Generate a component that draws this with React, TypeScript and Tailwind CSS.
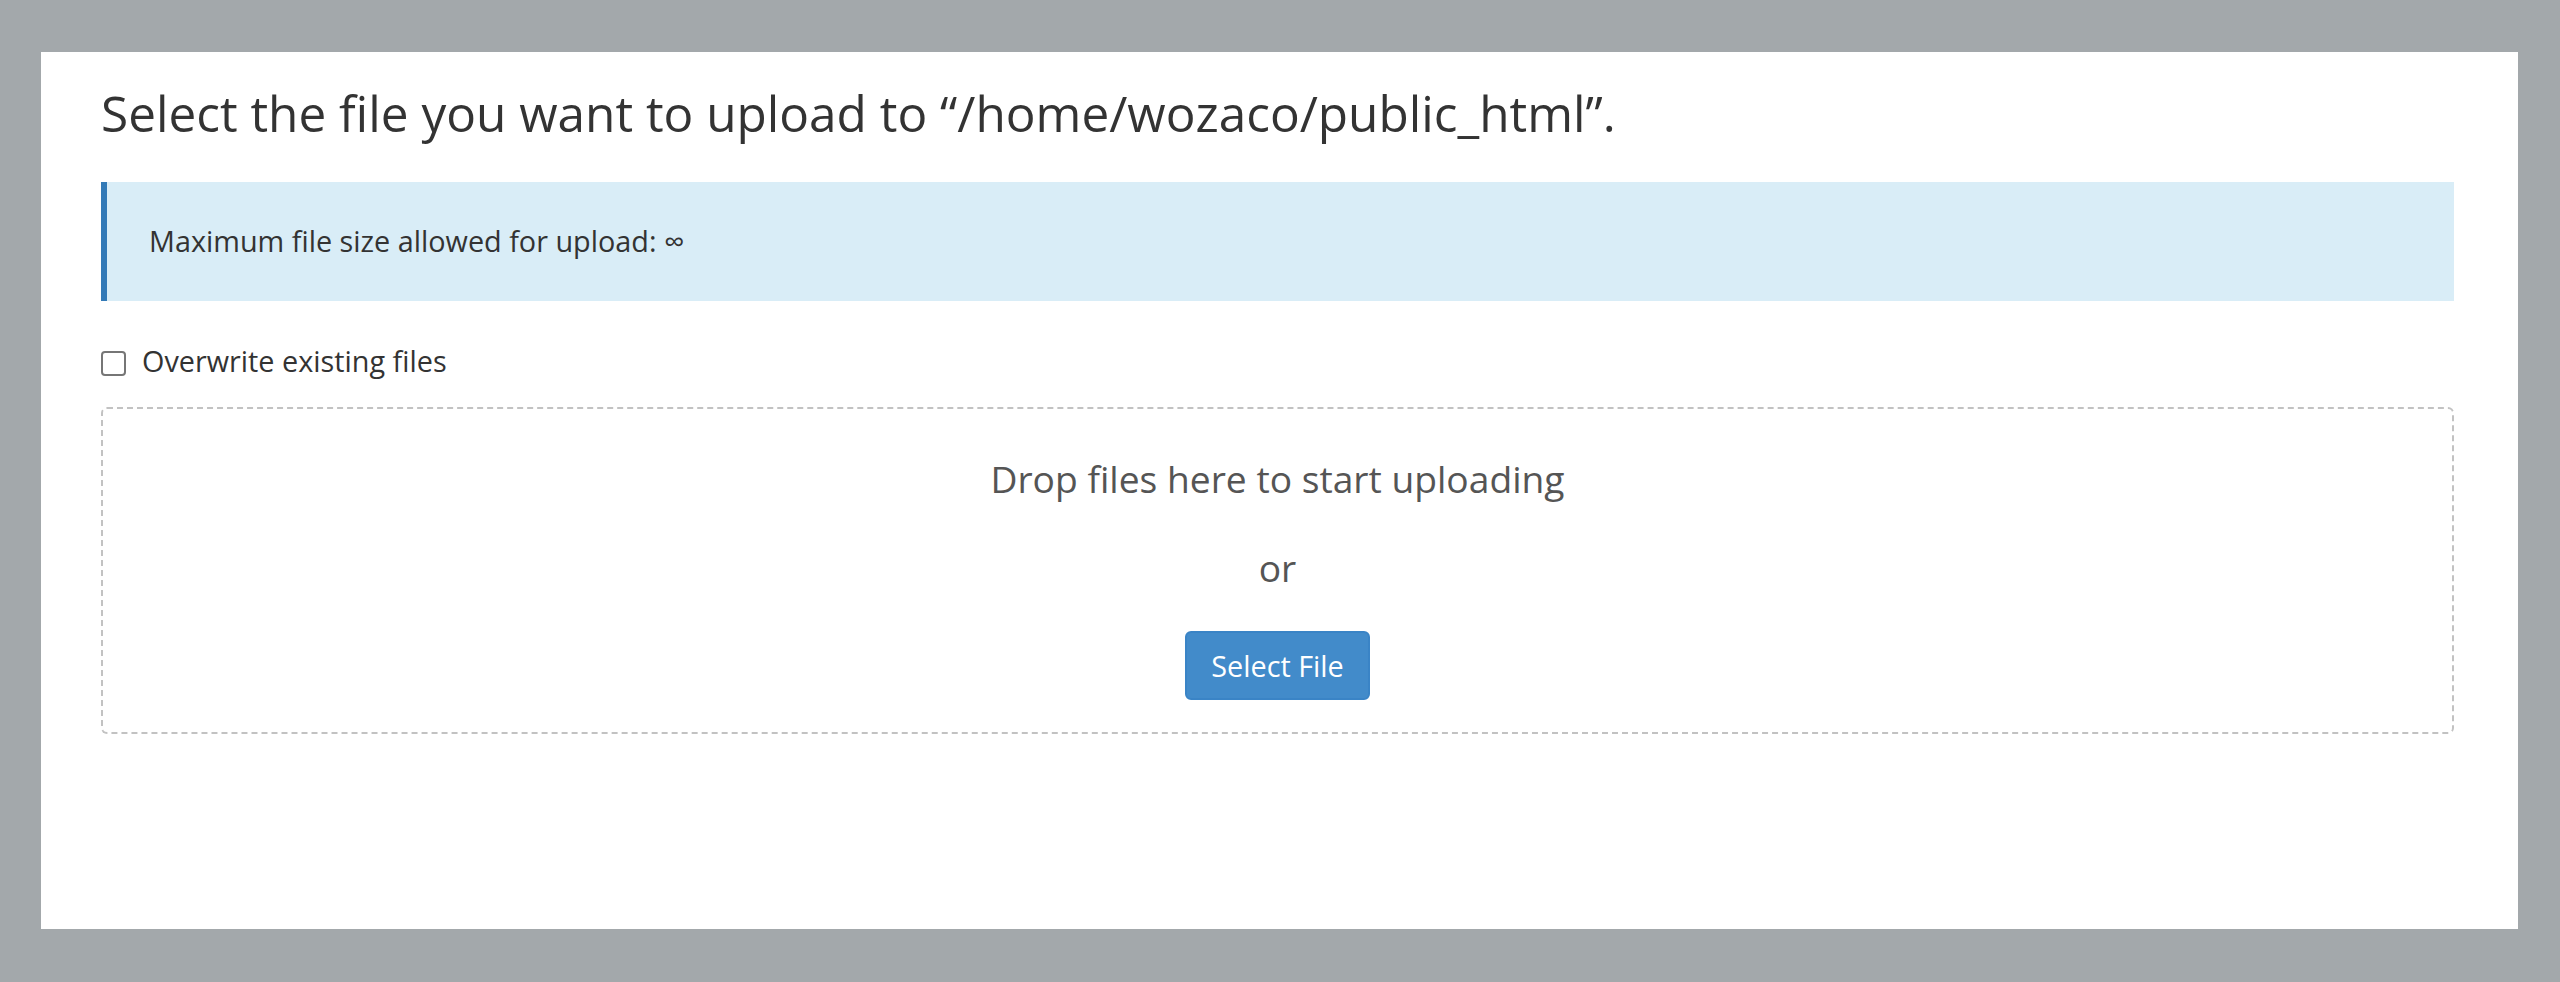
import React from "react";

export default function App() {
  return (
    <div
      className="h-[982px] w-full bg-[#a3a8ab] pt-[52px] pb-[53px] pl-[41px] pr-[42px]"
      style={{ fontFamily: '"Open Sans", "Noto Sans", sans-serif' }}
    >
      <div className="h-full w-full bg-white pt-[33px] pl-[60px] pr-[64px]">
        <h1 className="text-[49.5px] leading-[56px] font-normal text-[#333333]">
          Select the file you want to upload to “/home/wozaco/public_html”.
        </h1>

        <div className="mt-[41px] border-l-[6px] border-[#337ab7] bg-[#d9edf7] pt-[39px] pb-[40px] pl-[42px] text-[28.8px] leading-[40px] text-[#333333]">
          Maximum file size allowed for upload: ∞
        </div>

        <label className="mt-[40px] flex items-center gap-[16px] text-[28.8px] leading-[40px] text-[#333333]">
          <span className="mt-[4px] block h-[25px] w-[25px] rounded-[4px] border-2 border-[#767676] bg-white" />
          <span>Overwrite existing files</span>
        </label>

        <div className="mt-[26px] flex h-[327px] flex-col items-center rounded-[6px] border-2 border-dashed border-[#c2c2c2] pt-[45px]">
          <div className="text-[37.2px] leading-[50px] text-[#555555]">
            Drop files here to start uploading
          </div>
          <div className="mt-[39px] text-[37.2px] leading-[50px] text-[#555555]">or</div>
          <button className="mt-[38px] h-[69px] w-[185px] rounded-[6px] border-2 border-[#3a84c6] bg-[#428bca] text-[28.8px] leading-[40px] text-white">
            Select File
          </button>
        </div>
      </div>
    </div>
  );
}
